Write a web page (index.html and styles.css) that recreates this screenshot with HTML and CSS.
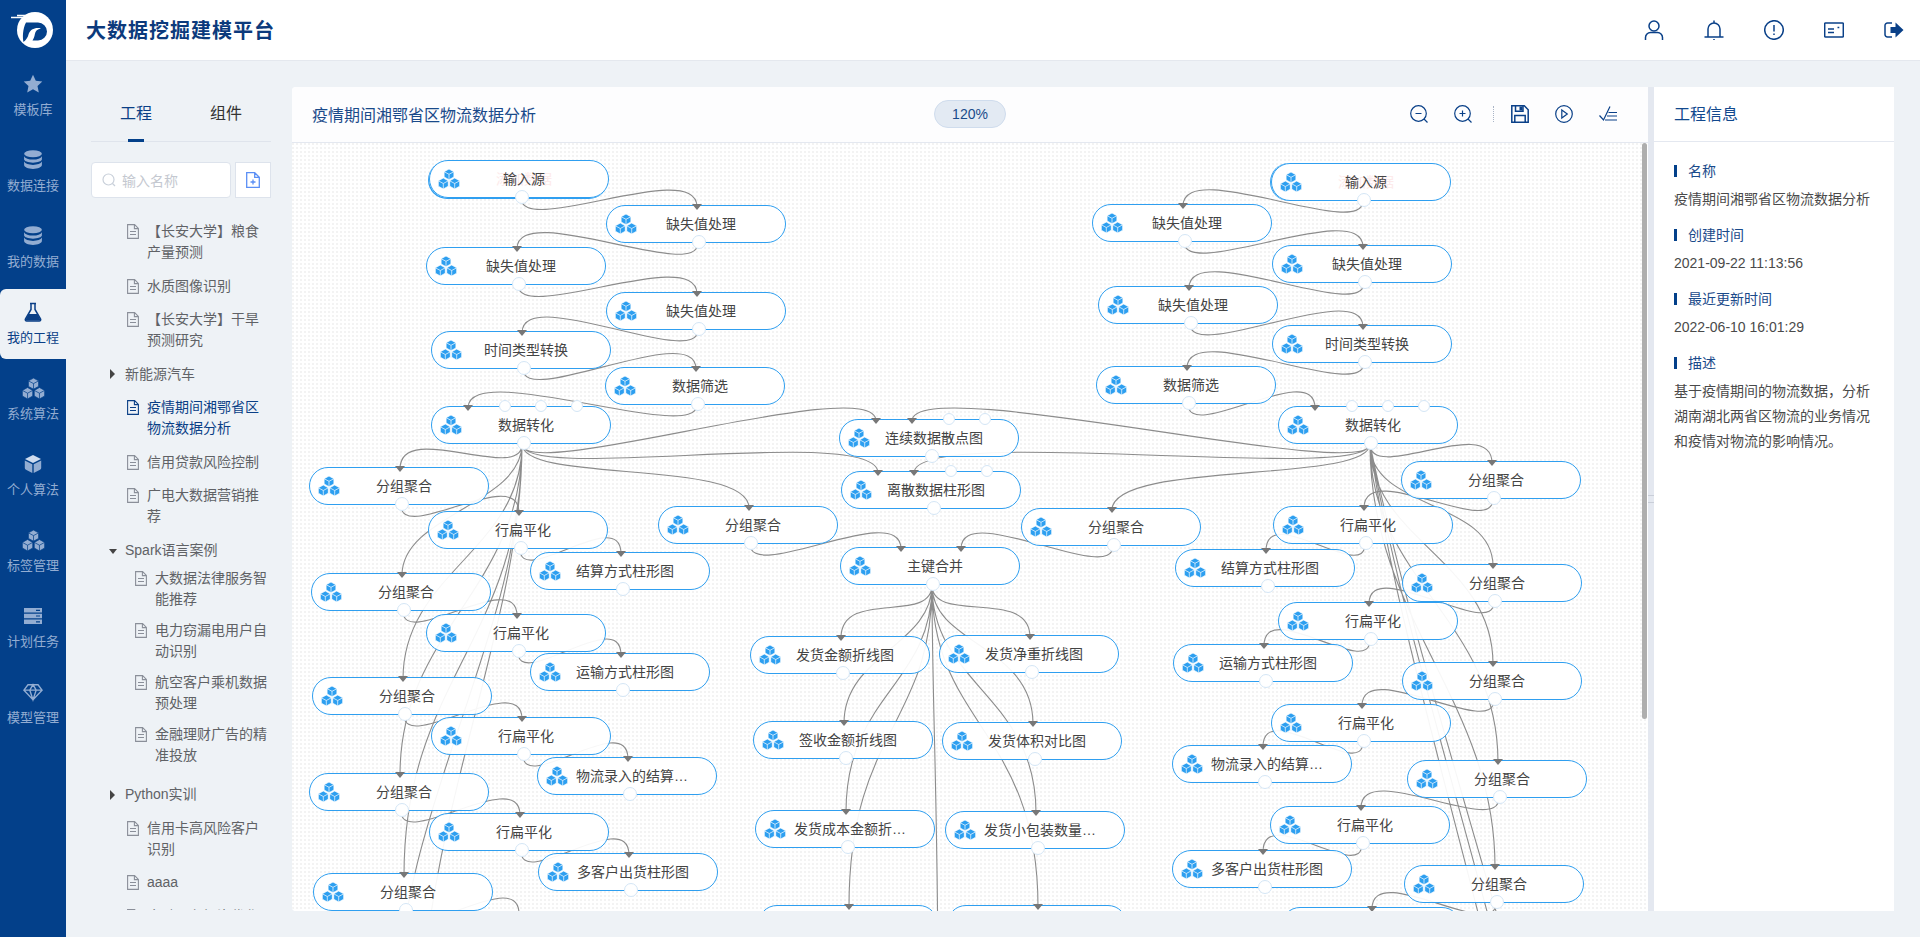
FILE: index.html
```html
<!DOCTYPE html>
<html lang="zh-CN">
<head>
<meta charset="utf-8">
<title>大数据挖掘建模平台</title>
<link rel="stylesheet" href="styles.css">
</head>
<body>
<svg class="defs" aria-hidden="true">
  <symbol id="cube" viewBox="0 0 22 20">
    <g fill="currentColor" stroke="var(--cut,#fff)" stroke-width=".7">
      <path d="M11 0L15.900 2.700V8L11 10.700L6.100 8V2.700Z"/>
      <path d="M5.300 9L10.300 11.800V17.200L5.300 20L.3 17.200V11.800Z"/>
      <path d="M16.700 9L21.700 11.800V17.200L16.700 20L11.700 17.200V11.800Z"/>
      <path d="M6.100 2.700L11 5.300L15.900 2.700M11 5.300V10.700M.3 11.800L5.300 14.500L10.300 11.800M5.300 14.500V20M11.700 11.800L16.700 14.500L21.700 11.800M16.700 14.500V20" fill="none"/>
    </g>
  </symbol>
  <symbol id="db" viewBox="0 0 18 18">
    <ellipse cx="9" cy="3.400" rx="8" ry="3.200" fill="currentColor"/>
    <path d="M1 5.600c1 2 4 3 8 3s7-1 8-3v2.800c0 1.700-3.600 3-8 3s-8-1.300-8-3zM1 10.400c1 2 4 3 8 3s7-1 8-3v3.200c0 1.900-3.600 3.400-8 3.400s-8-1.500-8-3.400z" fill="currentColor"/>
  </symbol>
  <symbol id="doc" viewBox="0 0 12 15">
    <path d="M.6.6h7l3.800 3.800v10H.6zM7.400.6v4h4M3 7.500h6M3 10.500h6" fill="none" stroke="currentColor" stroke-width="1.100"/>
  </symbol>
</svg>

<aside class="side">
  <div class="logo">
    <svg viewBox="0 0 44 40" class="logo-mark">
      <circle cx="24" cy="20" r="18" fill="#fff"/>
      <path d="M15 12.500h12a9 9 0 0 1 0 18h-5.500c1.200-2 2-4 2.400-6.500.4-3 2.600-5 6.100-5.500-5-1.500-11 .5-12.500 6-.6 2.500-2 5-5 7.500C11.500 28 11.500 19 15 12.500z" fill="#03408a"/>
      <path d="M0 7.500h14M6 5.500h12" stroke="#fff" stroke-width="1.400"/>
    </svg>
  </div>
  <nav class="menu">
    <a class="item"><svg class="ico" viewBox="0 0 20 20"><path d="M10 .8l2.800 6 6.500.8-4.800 4.400 1.300 6.500L10 15.300l-5.800 3.200 1.300-6.500L.7 7.600l6.500-.8z" fill="currentColor"/></svg><span>模板库</span></a>
    <a class="item"><svg class="ico"><use href="#db"/></svg><span>数据连接</span></a>
    <a class="item"><svg class="ico"><use href="#db"/></svg><span>我的数据</span></a>
    <a class="item on"><svg class="ico" viewBox="0 0 20 20"><path d="M7 1.500h6M8 1.500v6L2.500 17c-.6 1 .1 2 1.200 2h12.600c1.100 0 1.800-1 1.200-2L12 7.500v-6" fill="none" stroke="currentColor" stroke-width="1.500"/><path d="M5.500 12h9l3.300 6.500H2.200z" fill="currentColor"/></svg><span>我的工程</span></a>
    <a class="item wide"><svg class="ico"><use href="#cube"/></svg><span>系统算法</span></a>
    <a class="item"><svg class="ico" viewBox="0 0 20 20"><path d="M10 1l8 4-8 4-8-4z" fill="#cfdcef"/><path d="M1.800 6.500L9.300 10.300V19L3 15.800c-.8-.4-1.200-1-1.200-1.800zM18.200 6.500L10.700 10.300V19l6.300-3.200c.8-.4 1.200-1 1.200-1.800z" fill="currentColor"/></svg><span>个人算法</span></a>
    <a class="item wide"><svg class="ico"><use href="#cube"/></svg><span>标签管理</span></a>
    <a class="item"><svg class="ico" viewBox="0 0 20 20"><path d="M1 2h18v4.500H1zM1 7.800h18v4.500H1zM1 13.600h18v4.500H1z" fill="currentColor"/><path d="M13 4.300h4M13 10h4M13 15.800h4" stroke="#03408a" stroke-width="1.200"/></svg><span>计划任务</span></a>
    <a class="item"><svg class="ico" viewBox="0 0 22 20"><path d="M5.500 2h11L21 8 11 18.500 1 8zM1 8h20M7.500 8L11 18.500 14.500 8 11 2 7.500 8" fill="none" stroke="currentColor" stroke-width="1.500"/></svg><span>模型管理</span></a>
  </nav>
</aside>

<div class="main">
  <header class="top">
    <h1>大数据挖掘建模平台</h1>
    <div class="top-tools">
      <svg class="hi" viewBox="0 0 20 20"><circle cx="10" cy="6" r="5"/><path d="M1.500 20v-2.500a5 5 0 0 1 5-5h7a5 5 0 0 1 5 5V20"/></svg>
      <svg class="hi" viewBox="0 0 20 20"><path d="M4 17V9a6 6 0 0 1 12 0v8M.5 17h19M9 20h2M10 .5v2.500"/></svg>
      <svg class="hi" viewBox="0 0 20 20"><circle cx="10" cy="10" r="9.300"/><path d="M10 5v6.500M10 13.500v1.500"/></svg>
      <svg class="hi" viewBox="0 0 20 20"><rect x=".7" y="3" width="18.600" height="14" rx=".8"/><path d="M4 9h6M4 12.500h6M13.500 7.500h1.800"/></svg>
      <svg class="hi" viewBox="0 0 20 20"><path d="M8 3H3.500a2.500 2.500 0 0 0-2.500 2.500v9A2.500 2.500 0 0 0 3.500 17H8"/><path class="solid" d="M6.500 7h5V2.500l8 7.500-8 7.500V13h-5z"/></svg>
    </div>
  </header>

  <div class="content">
    <section class="panel">
      <div class="tabs"><div class="tab on">工程</div><div class="tab">组件</div></div>
      <div class="search">
        <div class="input">
          <svg class="glass" viewBox="0 0 14 14"><circle cx="6.500" cy="6.500" r="5.500"/><path d="M10.500 10.500l2.500 2.500"/></svg>
          <span>输入名称</span>
        </div>
        <button class="add" type="button"><svg viewBox="0 0 14 16"><path d="M.7.7h8l4.600 4.600v10H.7zM8.700.7v4.600h4.600M7 7.500v5M4.500 10h5"/></svg></button>
      </div>
      <div class="tree">
        <div class="row"><svg class="doc"><use href="#doc"/></svg><span>【长安大学】粮食产量预测</span></div>
        <div class="row"><svg class="doc"><use href="#doc"/></svg><span>水质图像识别</span></div>
        <div class="row"><svg class="doc"><use href="#doc"/></svg><span>【长安大学】干旱预测研究</span></div>
        <div class="group"><i class="caret"></i><span>新能源汽车</span></div>
        <div class="row on"><svg class="doc"><use href="#doc"/></svg><span>疫情期间湘鄂省区物流数据分析</span></div>
        <div class="row"><svg class="doc"><use href="#doc"/></svg><span>信用贷款风险控制</span></div>
        <div class="row"><svg class="doc"><use href="#doc"/></svg><span>广电大数据营销推荐</span></div>
        <div class="group"><i class="caret open"></i><span>Spark语言案例</span></div>
        <div class="row sub first"><svg class="doc"><use href="#doc"/></svg><span>大数据法律服务智能推荐</span></div>
        <div class="row sub"><svg class="doc"><use href="#doc"/></svg><span>电力窃漏电用户自动识别</span></div>
        <div class="row sub"><svg class="doc"><use href="#doc"/></svg><span>航空客户乘机数据预处理</span></div>
        <div class="row sub"><svg class="doc"><use href="#doc"/></svg><span>金融理财广告的精准投放</span></div>
        <div class="group after-sub"><i class="caret"></i><span>Python实训</span></div>
        <div class="row"><svg class="doc"><use href="#doc"/></svg><span>信用卡高风险客户识别</span></div>
        <div class="row"><svg class="doc"><use href="#doc"/></svg><span>aaaa</span></div>
        <div class="row"><svg class="doc"><use href="#doc"/></svg><span>金融服务投资优化分析</span></div>
      </div>
    </section>

    <section class="card">
      <div class="card-head">
        <div class="card-title">疫情期间湘鄂省区物流数据分析</div>
        <div class="pill">120%</div>
        <div class="tools">
          <svg class="ti" viewBox="0 0 18 18"><circle cx="8.500" cy="8.500" r="7.800"/><path d="M5.500 8.500h6M14 14l3.500 3.500"/></svg>
          <svg class="ti" viewBox="0 0 18 18"><circle cx="8.500" cy="8.500" r="7.800"/><path d="M5.500 8.500h6M8.500 5.500v6M14 14l3.500 3.500"/></svg>
          <i class="sep"></i>
          <svg class="ti bold" viewBox="0 0 18 18"><path d="M.8.8h12.500l3.900 3.900v12.500H.8zM4.500.8v5.500h7.500V.8M3.800 17.200v-6.700h10.400v6.700"/><path class="solid" d="M8.500 1.500h3v4h-3z"/></svg>
          <svg class="ti" viewBox="0 0 18 18"><circle cx="9" cy="9" r="8.300"/><path d="M6.800 5l5.500 4-5.500 4z"/></svg>
          <svg class="ti" viewBox="0 0 18 18"><path d="M.5 10.500l4 4.500L11 1.500M9.500 7.500h8.500M8 11h10M6 15h12"/></svg>
        </div>
      </div>
      <div class="canvas">
        <div class="stage">
          <svg class="edges" viewBox="0 0 1920 1100">
            <path d="M521 198C521 238 697 157 697 207M698 243C698 283 517 199 517 249M518 285C518 325 697 244 697 294M698 330C698 370 522 283 522 333M523 369C523 409 696 319 696 369M697 405C697 445 468 358 468 408"/>
            <path d="M1363 201C1363 241 1183 156 1183 206M1184 242C1184 282 1363 197 1363 247M1364 283C1364 323 1189 238 1189 288M1190 324C1190 364 1363 277 1363 327M1364 363C1364 403 1187 318 1187 368M1188 404C1188 444 1315 358 1315 408"/>
            <path d="M522 444C522 484 400 419 400 469M522 444C522 484 876 371 876 421M522 444C522 484 878 423 878 473M522 444C522 484 749 458 749 508M522 444C522 504 402 515 402 575M522 444C522 550 403 573 403 679M522 444C522 590 400 630 400 775M522 444C522 640 404 680 404 875M522 444C522 640 400 800 395 1020M522 444C522 620 430 800 420 1020"/>
            <path d="M401 505C401 545 519 463 519 513M403 611C403 651 517 566 517 616M404 715C404 755 522 669 522 719M401 811C401 851 520 765 520 815M405 911C405 951 519 864 519 914"/>
            <path d="M520 549C520 589 621 504 621 554M518 652C518 692 621 605 621 655M523 755C523 795 628 709 628 759M521 851C521 891 629 805 629 855"/>
            <path d="M750 544C750 584 901 499 901 549M1113 546C1113 586 961 499 961 549"/>
            <path d="M932 585C932 625 841 588 841 638M932 585C932 625 1030 587 1030 637M932 585C932 645 844 655 844 723M932 585C932 645 1033 645 1033 724M932 585C932 685 846 695 846 812M932 585C932 685 1036 695 1036 813M932 585C932 725 849 730 849 907M932 585C932 725 1038 730 1038 907M932 585C932 700 938 800 938 1000"/>
            <path d="M1370 444C1370 484 912 371 912 421M1370 444C1370 484 914 423 914 473M1370 444C1370 484 1112 460 1112 510M1370 444C1370 484 1492 413 1492 463M1370 444C1370 510 1493 500 1493 566M1370 444C1370 540 1493 560 1493 664M1370 444C1370 580 1498 620 1498 762M1370 444C1370 620 1495 700 1495 867M1370 444C1400 590 1450 750 1510 960M1370 444C1395 590 1450 770 1500 960M1370 444C1390 590 1440 760 1490 960"/>
            <path d="M1493 499C1493 539 1364 458 1364 508M1494 602C1494 642 1369 554 1369 604M1494 700C1494 740 1362 656 1362 706M1499 798C1499 838 1361 758 1361 808M1496 903C1496 943 1372 859 1372 909"/>
            <path d="M1365 544C1365 584 1266 501 1266 551M1370 640C1370 680 1264 596 1264 646M1363 742C1363 782 1263 697 1263 747M1362 844C1362 884 1263 802 1263 852"/>
          </svg>

          <div class="node src first" style="left:429px;top:160px"><svg class="cube"><use href="#cube"/></svg><span>输入源</span><em>添加数据</em></div>
          <div class="node" style="left:606px;top:205px"><svg class="cube"><use href="#cube"/></svg><span>缺失值处理</span></div>
          <div class="node" style="left:426px;top:247px"><svg class="cube"><use href="#cube"/></svg><span>缺失值处理</span></div>
          <div class="node" style="left:606px;top:292px"><svg class="cube"><use href="#cube"/></svg><span>缺失值处理</span></div>
          <div class="node" style="left:431px;top:331px"><svg class="cube"><use href="#cube"/></svg><span>时间类型转换</span></div>
          <div class="node" style="left:605px;top:367px"><svg class="cube"><use href="#cube"/></svg><span>数据筛选</span></div>
          <div class="node multi" style="left:431px;top:406px"><svg class="cube"><use href="#cube"/></svg><span>数据转化</span><b class="x37"></b><i class="p74"></i><i class="p110"></i><i class="p146"></i></div>

          <div class="node" style="left:309px;top:467px"><svg class="cube"><use href="#cube"/></svg><span>分组聚合</span></div>
          <div class="node" style="left:428px;top:511px"><svg class="cube"><use href="#cube"/></svg><span>行扁平化</span></div>
          <div class="node" style="left:530px;top:552px"><svg class="cube"><use href="#cube"/></svg><span>结算方式柱形图</span></div>
          <div class="node" style="left:311px;top:573px"><svg class="cube"><use href="#cube"/></svg><span>分组聚合</span></div>
          <div class="node" style="left:426px;top:614px"><svg class="cube"><use href="#cube"/></svg><span>行扁平化</span></div>
          <div class="node" style="left:530px;top:653px"><svg class="cube"><use href="#cube"/></svg><span>运输方式柱形图</span></div>
          <div class="node" style="left:312px;top:677px"><svg class="cube"><use href="#cube"/></svg><span>分组聚合</span></div>
          <div class="node" style="left:431px;top:717px"><svg class="cube"><use href="#cube"/></svg><span>行扁平化</span></div>
          <div class="node" style="left:537px;top:757px"><svg class="cube"><use href="#cube"/></svg><span>物流录入的结算…</span></div>
          <div class="node" style="left:309px;top:773px"><svg class="cube"><use href="#cube"/></svg><span>分组聚合</span></div>
          <div class="node" style="left:429px;top:813px"><svg class="cube"><use href="#cube"/></svg><span>行扁平化</span></div>
          <div class="node" style="left:538px;top:853px"><svg class="cube"><use href="#cube"/></svg><span>多客户出货柱形图</span></div>
          <div class="node" style="left:313px;top:873px"><svg class="cube"><use href="#cube"/></svg><span>分组聚合</span></div>

          <div class="node" style="left:658px;top:506px"><svg class="cube"><use href="#cube"/></svg><span>分组聚合</span></div>
          <div class="node multi" style="left:839px;top:419px"><svg class="cube"><use href="#cube"/></svg><span>连续数据散点图</span><b class="x37"></b><b class="x73"></b><i class="p110"></i><i class="p146"></i></div>
          <div class="node multi" style="left:841px;top:471px"><svg class="cube"><use href="#cube"/></svg><span>离散数据柱形图</span><b class="x37"></b><b class="x73"></b><i class="p110"></i><i class="p146"></i></div>
          <div class="node" style="left:1021px;top:508px"><svg class="cube"><use href="#cube"/></svg><span>分组聚合</span></div>
          <div class="node multi" style="left:840px;top:547px"><svg class="cube"><use href="#cube"/></svg><span>主键合并</span><b class="x61"></b><b class="x121"></b></div>
          <div class="node" style="left:750px;top:636px"><svg class="cube"><use href="#cube"/></svg><span>发货金额折线图</span></div>
          <div class="node" style="left:939px;top:635px"><svg class="cube"><use href="#cube"/></svg><span>发货净重折线图</span></div>
          <div class="node" style="left:753px;top:721px"><svg class="cube"><use href="#cube"/></svg><span>签收金额折线图</span></div>
          <div class="node" style="left:942px;top:722px"><svg class="cube"><use href="#cube"/></svg><span>发货体积对比图</span></div>
          <div class="node" style="left:755px;top:810px"><svg class="cube"><use href="#cube"/></svg><span>发货成本金额折…</span></div>
          <div class="node" style="left:945px;top:811px"><svg class="cube"><use href="#cube"/></svg><span>发货小包装数量…</span></div>
          <div class="node" style="left:758px;top:905px"></div>
          <div class="node" style="left:947px;top:905px"></div>

          <div class="node src" style="left:1271px;top:163px"><svg class="cube"><use href="#cube"/></svg><span>输入源</span><em>添加数据</em></div>
          <div class="node" style="left:1092px;top:204px"><svg class="cube"><use href="#cube"/></svg><span>缺失值处理</span></div>
          <div class="node" style="left:1272px;top:245px"><svg class="cube"><use href="#cube"/></svg><span>缺失值处理</span></div>
          <div class="node" style="left:1098px;top:286px"><svg class="cube"><use href="#cube"/></svg><span>缺失值处理</span></div>
          <div class="node" style="left:1272px;top:325px"><svg class="cube"><use href="#cube"/></svg><span>时间类型转换</span></div>
          <div class="node" style="left:1096px;top:366px"><svg class="cube"><use href="#cube"/></svg><span>数据筛选</span></div>
          <div class="node multi" style="left:1278px;top:406px"><svg class="cube"><use href="#cube"/></svg><span>数据转化</span><b class="x37"></b><i class="p74"></i><i class="p110"></i><i class="p146"></i></div>

          <div class="node" style="left:1401px;top:461px"><svg class="cube"><use href="#cube"/></svg><span>分组聚合</span></div>
          <div class="node" style="left:1273px;top:506px"><svg class="cube"><use href="#cube"/></svg><span>行扁平化</span></div>
          <div class="node" style="left:1175px;top:549px"><svg class="cube"><use href="#cube"/></svg><span>结算方式柱形图</span></div>
          <div class="node" style="left:1402px;top:564px"><svg class="cube"><use href="#cube"/></svg><span>分组聚合</span></div>
          <div class="node" style="left:1278px;top:602px"><svg class="cube"><use href="#cube"/></svg><span>行扁平化</span></div>
          <div class="node" style="left:1173px;top:644px"><svg class="cube"><use href="#cube"/></svg><span>运输方式柱形图</span></div>
          <div class="node" style="left:1402px;top:662px"><svg class="cube"><use href="#cube"/></svg><span>分组聚合</span></div>
          <div class="node" style="left:1271px;top:704px"><svg class="cube"><use href="#cube"/></svg><span>行扁平化</span></div>
          <div class="node" style="left:1172px;top:745px"><svg class="cube"><use href="#cube"/></svg><span>物流录入的结算…</span></div>
          <div class="node" style="left:1407px;top:760px"><svg class="cube"><use href="#cube"/></svg><span>分组聚合</span></div>
          <div class="node" style="left:1270px;top:806px"><svg class="cube"><use href="#cube"/></svg><span>行扁平化</span></div>
          <div class="node" style="left:1172px;top:850px"><svg class="cube"><use href="#cube"/></svg><span>多客户出货柱形图</span></div>
          <div class="node" style="left:1404px;top:865px"><svg class="cube"><use href="#cube"/></svg><span>分组聚合</span></div>
          <div class="node" style="left:1281px;top:907px"></div>
        </div>
        <div class="thumb"></div>
      </div>
    </section>

    <div class="divider"><i></i></div>

    <section class="info">
      <div class="info-head">工程信息</div>
      <div class="info-body">
        <h3>名称</h3>
        <p>疫情期间湘鄂省区物流数据分析</p>
        <h3>创建时间</h3>
        <p>2021-09-22 11:13:56</p>
        <h3>最近更新时间</h3>
        <p>2022-06-10 16:01:29</p>
        <h3>描述</h3>
        <p class="desc">基于疫情期间的物流数据，分析湖南湖北两省区物流的业务情况和疫情对物流的影响情况。</p>
      </div>
    </section>
  </div>
</div>
</body>
</html>
```
FILE: styles.css
```css
* { box-sizing: border-box; }
html, body { margin: 0; height: 937px; overflow: hidden; }
body {
  display: flex;
  background: #eef2f6;
  font: 14px "Liberation Sans", "Noto Sans CJK SC", sans-serif;
  color: #555;
}
.defs { position: absolute; width: 0; height: 0; }

/* sidebar */
.side { width: 66px; flex: none; background: #03408a; color: #93add2; }
.logo { height: 60px; padding: 10px 0 0 11px; }
.logo-mark { display: block; width: 44px; height: 40px; }
.menu { display: flex; flex-direction: column; gap: 6px; margin-top: 1px; }
.item { height: 70px; padding-top: 13px; display: flex; flex-direction: column; align-items: center; font-size: 13px; line-height: 20px; }
.item span { margin-top: 6px; white-space: nowrap; }
.ico { width: 20px; height: 20px; }
.item.wide .ico { width: 23px; height: 21px; margin-bottom: -1px; --cut: #03408a; }
.item.on { background: #eef2f6; color: #0a3f86; border-radius: 6px 0 0 6px; }

/* top bar */
.main { flex: 1; min-width: 0; display: flex; flex-direction: column; }
.top { height: 61px; flex: none; background: #fff; border-bottom: 1px solid #e4e8ee; display: flex; align-items: center; padding: 0 16px 1px 20px; }
.top h1 { margin: 0; font: 700 20px/28px "Noto Sans CJK SC", sans-serif; letter-spacing: 1px; color: #0c3a7c; }
.top-tools { margin-left: auto; display: flex; gap: 40px; }
.hi { width: 20px; height: 20px; fill: none; stroke: #0a4088; stroke-width: 1.500; }
.solid { fill: #0a4088; stroke: none; }

/* content */
.content { flex: 1; min-height: 0; display: flex; padding: 26px 26px 26px 0; }

/* left panel */
.panel { width: 226px; flex: none; padding: 0 21px 0 25px; }
.tabs { display: flex; height: 55px; border-bottom: 1px solid #dfe4ec; }
.tab { width: 90px; text-align: center; font-size: 16px; line-height: 54px; color: #333; position: relative; }
.tab.on { color: #0a3f86; }
.tab.on::after { content: ""; position: absolute; left: 37px; bottom: -1px; width: 16px; height: 3px; background: #03408a; }
.search { display: flex; gap: 4px; margin-top: 20px; height: 36px; }
.input { flex: 1; background: #fff; border: 1px solid #dde3ec; border-radius: 4px; display: flex; align-items: center; padding-left: 10px; gap: 6px; color: #c4c8d0; }
.glass { width: 14px; height: 14px; fill: none; stroke: #c9d0da; stroke-width: 1.200; }
.add { width: 36px; height: 36px; padding: 0; background: #fff; border: 1px solid #dde3ec; display: flex; align-items: center; justify-content: center; }
.add svg { width: 14px; height: 16px; fill: none; stroke: #5a8ff5; stroke-width: 1.300; }

.tree { margin-top: 17px; height: 695px; overflow: hidden; line-height: 21px; color: #606266; }
.row { display: flex; padding: 6.250px 0 6.250px 36px; }
.row span { width: 124px; }
.doc { width: 12px; height: 15px; flex: none; margin: 3px 8px 0 0; color: #8a8f99; }
.row.on { color: #0a3f86; }
.row.on .doc { color: #0a3f86; }
.row.sub { padding: 5px 0 5px 44px; }
.row.sub span { width: 116px; }
.row.first { margin-top: -3.750px; }
.group { display: flex; align-items: center; height: 33.500px; padding-left: 18px; }
.group.after-sub { margin-top: 6.750px; }
.caret { width: 6px; margin: 0 9px 0 1px; border: 5px solid transparent; border-left: 5px solid #444; border-right: 0; }
.caret.open { width: 8px; margin: 2px 8px 0 0; border: 4px solid transparent; border-top: 5px solid #444; border-bottom: 0; }

/* card */
.card { flex: 1; min-width: 0; background: #fff; border-radius: 4px 0 0 4px; display: flex; flex-direction: column; overflow: hidden; }
.card-head { height: 56px; flex: none; display: flex; align-items: center; padding: 0 31px 1px 20px; background: #fdfdfe; border-bottom: 1px solid #e4e8f0; }
.card-title { width: 622px; font-size: 16px; color: #1a4a8a; }
.pill { width: 72px; height: 28px; border: 1px solid #cfdced; border-radius: 14px; background: #e3eaf3; color: #1a4a8a; text-align: center; line-height: 26px; font-size: 14px; }
.tools { margin-left: auto; display: flex; align-items: center; gap: 26px; }
.ti { width: 18px; height: 18px; fill: none; stroke: #0a4088; stroke-width: 1.200; overflow: visible; }
.ti.bold { stroke-width: 1.500; }
.sep { width: 0; height: 16px; border-left: 1px dotted #a9b4c6; margin: 0 -9px 0 -5px; }

.canvas {
  flex: 1; min-height: 0; position: relative; overflow: hidden;
  background-color: #fff;
  background-image: radial-gradient(circle at 1px 1px, #f3f3f3 1px, transparent 1px);
  background-size: 4px 4px;
}
.stage { position: absolute; left: -292px; top: -143px; width: 1920px; height: 1100px; }
.edges { position: absolute; left: 0; top: 0; width: 1920px; height: 1100px; fill: none; stroke: #8c8c8c; stroke-width: 1.100; }
.thumb { position: absolute; right: 1px; top: 0; width: 5px; height: 576px; background: #aeaeae; border-radius: 3px; }

/* nodes */
.node {
  position: absolute; width: 180px; height: 38px;
  border: 1px solid #2f9ff0; border-radius: 19px;
  background: rgba(255, 255, 255, .93);
  display: flex; align-items: center; padding-left: 8px;
  color: #444; line-height: 20px;
}
.node::before, .node b {
  content: ""; position: absolute; left: 85px; top: -2px;
  border: 5px solid transparent; border-top: 6px solid #777; border-bottom: 0;
}
.node::after, .node i {
  content: ""; position: absolute; left: 85px; bottom: -7px;
  width: 12px; height: 12px; border-radius: 50%;
  border: 1px solid #d4e6f6; background: #fff;
}
.node i { bottom: auto; top: -7px; }
.src::before, .multi::before { display: none; }
.node b.x37 { left: 31px; }
.node b.x61 { left: 55px; }
.node b.x73 { left: 67px; }
.node b.x121 { left: 115px; }
.node i.p74 { left: 67px; }
.node i.p110 { left: 103px; }
.node i.p146 { left: 139px; }
.cube { width: 22px; height: 20px; flex: none; color: #2d9ff0; }
.node span { width: 112px; margin-left: 8px; text-align: center; white-space: nowrap; overflow: hidden; }
.node em { position: absolute; left: 66px; top: 8px; width: 56px; font-style: normal; color: #fdeaea; z-index: -1; white-space: nowrap; }
.src { z-index: 0; box-shadow: -1px 0 0 #2f9ff0; }
.src.first { box-shadow: -1px 1px 0 #2f9ff0; }

/* divider */
.divider { width: 6px; flex: none; background: #e4e8f0; position: relative; }
.divider i { position: absolute; left: 0; top: 408px; width: 6px; height: 8px; border-top: 1px solid #c9ced8; border-bottom: 1px solid #c9ced8; }

/* info */
.info { width: 240px; flex: none; background: #fff; }
.info-head { height: 55px; border-bottom: 1px solid #e4e8f0; padding: 0 20px; font-size: 16px; line-height: 56px; color: #12498e; }
.info-body { padding: 19px 20px 0; }
.info-body h3 { margin: 0; font-weight: 400; font-size: 14px; line-height: 20px; color: #1a4a8a; padding-left: 14px; position: relative; }
.info-body h3::before { content: ""; position: absolute; left: 0; top: 4px; width: 3px; height: 12px; background: #03408a; }
.info-body p { margin: 8px 0 16px; line-height: 20px; color: #4a4a4a; }
.info-body p.desc { line-height: 25px; margin-top: 6px; }
```
